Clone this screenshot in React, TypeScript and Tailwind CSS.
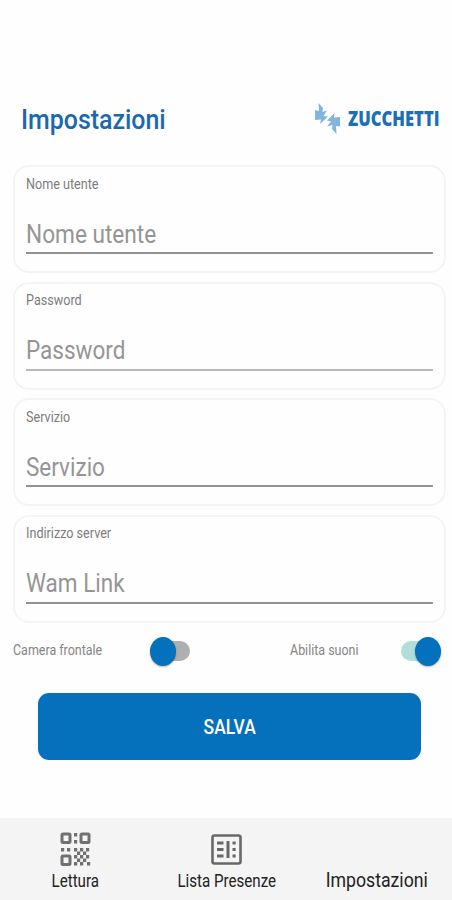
import clsx from "clsx";

const fields = [
  { label: "Nome utente", placeholder: "Nome utente", scale: "scale-x-[0.905]", line: "bg-[#929292]" },
  { label: "Password", placeholder: "Password", scale: "scale-x-[0.9]", line: "bg-[#b8b8b8]" },
  { label: "Servizio", placeholder: "Servizio", scale: "scale-x-[0.9]", line: "bg-[#929292]" },
  { label: "Indirizzo server", placeholder: "Wam Link", scale: "scale-x-[0.9]", line: "bg-[#929292]" },
];

function Logo() {
  return (
    <div className="flex w-[127px] items-start">
      <svg width="27" height="33" viewBox="0 0 27 33" className="shrink-0">
        <path d="M4.500 1 L9 6 L8.500 10 L13 8.500 L9.500 14 L14 14.500 L6 22 L7 17.500 L1 18 L1 8 L5 9 Z" fill="#82b5de" />
        <path d="M22.500 32 L18 27 L18.500 23 L13 24.500 L17 19.500 L13 18.500 L20.500 11 L20 15.500 L26 15 L26 24.500 L22 24 Z" fill="#82b5de" />
      </svg>
      <span className="ml-[7px] origin-left scale-x-[0.81] font-['Open_Sans',sans-serif] text-[20.500px] leading-8 font-extrabold text-[#1c6fb5]">
        ZUCCHETTI
      </span>
    </div>
  );
}

function Toggle({ on }: { on?: boolean }) {
  return (
    <div className={clsx("flex h-5 w-[40px] items-center rounded-full", on ? "justify-end bg-[#aee0d9]" : "bg-[#afafaf]")}>
      <div className="h-[29px] w-[26px] shrink-0 rounded-[50%] bg-[#0571bc] shadow-[0_1px_2px_rgba(0,0,0,0.3)]" />
    </div>
  );
}

function QrIcon() {
  const dots = [
    [14, 1], [14, 8], [1, 16], [7, 16],
    [14, 16], [20, 16], [26, 16], [17, 19.5], [23, 19.5], [14, 23], [20, 23], [26, 23],
    [17, 26.5], [23, 26.5], [14, 30], [20, 30], [27, 30],
  ];
  return (
    <svg width="31" height="35" viewBox="0 0 31 35" fill="none" stroke="#707070" strokeWidth="3">
      <rect x="2" y="2" width="8" height="8.500" rx="1" />
      <rect x="21" y="2" width="8" height="8.500" rx="1" />
      <rect x="2" y="24" width="8" height="8.500" rx="1" />
      {dots.map(([x, y]) => (
        <rect key={`${x}-${y}`} x={x} y={y} width="3.200" height="3.500" fill="#707070" stroke="none" />
      ))}
    </svg>
  );
}

function BallotIcon() {
  return (
    <svg width="31" height="31" viewBox="0 0 31 31" fill="none" stroke="#686868">
      <rect x="1.500" y="1.500" width="28" height="28" rx="2" strokeWidth="2.600" />
      <path d="M6 9h6.500M6 15.500h6.500M6 22h6.500M21.500 9h3.200M21.500 15.500h3.200M21.500 22h3.200" strokeWidth="3" />
      <path d="M17 7v17" strokeWidth="3" />
    </svg>
  );
}

export default function App() {
  return (
    <div className="flex h-[900px] w-[452px] flex-col overflow-hidden bg-[#fefefe] font-[Roboto,sans-serif]">
      <header className="flex h-[165px] items-start justify-between pt-[102px] pr-[11px] pl-[21px]">
        <h1 className="origin-left scale-x-[0.923] text-[27px] leading-9 font-medium text-[#1a69ae]">Impostazioni</h1>
        <Logo />
      </header>

      <main className="flex flex-col">
        <div className="flex flex-col gap-[8.600px] pr-1.5 pl-[13px]">
          {fields.map((f) => (
            <section key={f.label} className="flex h-[108px] flex-col rounded-[16px] border-2 border-[#f4f4f4] pr-[11px] pl-[11px]">
              <label className="mt-[6.600px] origin-left scale-x-[0.9] self-start text-[14px] leading-5 text-[#7c7c7c]">
                {f.label}
              </label>
              <span className={clsx("mt-[25px] origin-left self-start text-[25px] leading-8 text-[#959595]", f.scale)}>{f.placeholder}</span>
              <div className={clsx("mt-[1.400px] h-[2px] shrink-0", f.line)} />
            </section>
          ))}
        </div>

        <div className="mt-[14.400px] flex h-[28px] items-center pl-[13px]">
          <span className="w-[137px] origin-left scale-x-[0.89] pb-0.5 text-[14px] whitespace-nowrap text-[#858585]">Camera frontale</span>
          <Toggle />
          <span className="ml-[100px] w-[111px] origin-left scale-x-[0.89] pb-0.5 text-[14px] whitespace-nowrap text-[#858585]">Abilita suoni</span>
          <Toggle on />
        </div>

        <button className="mt-[28px] ml-[38px] flex h-[67px] w-[383px] items-center justify-center rounded-[11px] bg-[#0571bc] text-white">
          <span className="scale-x-[0.85] pt-0.5 text-[20.500px] font-medium">SALVA</span>
        </button>
      </main>

      <nav className="mt-auto flex h-[82px] bg-[#f4f4f4] text-[#222222]">
        <div className="flex w-[151px] flex-col items-center pt-[14px]">
          <QrIcon />
          <span className="mt-[2px] scale-x-[0.84] text-[18px] leading-6">Lettura</span>
        </div>
        <div className="flex w-[151px] flex-col items-center pt-[16px]">
          <BallotIcon />
          <span className="mt-[4px] scale-x-[0.84] text-[18px] leading-6 whitespace-nowrap">Lista Presenze</span>
        </div>
        <div className="flex w-[150px] flex-col items-center pt-[48px]">
          <span className="scale-x-[0.885] text-[20px] leading-7">Impostazioni</span>
        </div>
      </nav>
    </div>
  );
}
